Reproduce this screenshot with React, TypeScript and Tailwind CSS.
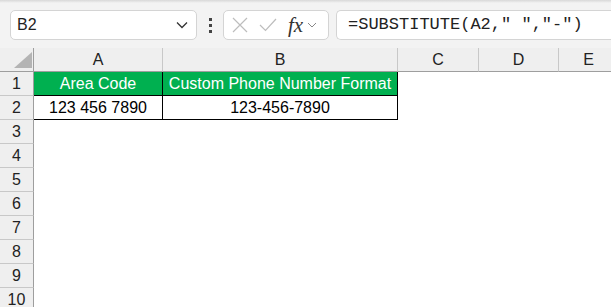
import React from 'react'

const cols = [
  { key: 'A', w: 129 },
  { key: 'B', w: 235 },
  { key: 'C', w: 81 },
  { key: 'D', w: 80 },
  { key: 'E', w: 60 },
]

const rows = [3, 4, 5, 6, 7, 8, 9, 10]

function Dots() {
  return (
    <div className="flex h-[30px] w-[26px] flex-col items-center justify-center gap-[3px]">
      <span className="h-[3px] w-[3px] bg-[#444]" />
      <span className="h-[3px] w-[3px] bg-[#444]" />
      <span className="h-[3px] w-[3px] bg-[#444]" />
    </div>
  )
}

function RowHead({ n }: { n: number }) {
  return (
    <div className="flex h-full w-[34px] shrink-0 items-center justify-center border-r border-b border-r-[#9e9e9e] border-b-[#c8c8c8] bg-[#efefef] text-[16px] text-[#222]">
      {n}
    </div>
  )
}

export default function App() {
  return (
    <div className="relative h-[307px] w-[611px] overflow-hidden bg-[#f3f3f3]" style={{ fontFamily: '"Liberation Sans", Arial, sans-serif' }}>
      <div className="h-[3px] bg-gradient-to-b from-[#d8d8d8] to-[#f3f3f3]" />
      {/* formula bar */}
      <div className="flex h-[45px] items-start pt-[7px] pl-[10px]">
        <div className="flex h-[30px] w-[187px] items-center justify-between rounded-[5px] border border-[#d4d4d4] bg-white pl-[6px] pr-[8px]">
          <span className="text-[16px] text-[#222]">B2</span>
          <svg width="12" height="8" viewBox="0 0 12 8" fill="none" stroke="#333" strokeWidth="1.3">
            <path d="M1 1.5 L6 6.5 L11 1.5" />
          </svg>
        </div>
        <Dots />
        <div className="flex h-[30px] w-[106px] items-center rounded-[5px] border border-[#d4d4d4] bg-white pl-[8px]">
          <svg width="16" height="16" viewBox="0 0 16 16" stroke="#bdbdbd" strokeWidth="1.2" fill="none">
            <path d="M1 1 L15 15 M15 1 L1 15" />
          </svg>
          <svg className="ml-[11px]" width="18" height="14" viewBox="0 0 18 14" stroke="#bdbdbd" strokeWidth="1.2" fill="none">
            <path d="M1 7 L6.5 12.5 L17 1" />
          </svg>
          <span className="ml-[11px] text-[21px] italic leading-none text-[#333]" style={{ fontFamily: '"Liberation Serif", serif' }}>fx</span>
          <svg className="ml-[4px]" width="10" height="6" viewBox="0 0 10 6" fill="none" stroke="#888" strokeWidth="1">
            <path d="M1 1 L5 5 L9 1" />
          </svg>
        </div>
        <div className="ml-[7px] flex h-[30px] flex-1 items-center rounded-l-[5px] border border-r-0 border-[#d4d4d4] bg-white pl-[11px]">
          <span className="text-[17px] text-[#222]" style={{ fontFamily: '"Liberation Mono", monospace' }}>=SUBSTITUTE(A2," ","-")</span>
        </div>
      </div>
      {/* column header */}
      <div className="flex h-[24px]">
        <div className="flex w-[34px] shrink-0 items-end justify-end border-r border-b border-[#9e9e9e] bg-[#efefef] pb-[3px] pr-[1px]">
          <svg width="18" height="16" viewBox="0 0 18 16">
            <polygon points="18,0 18,16 0,16" fill="#b4b4b4" />
          </svg>
        </div>
        {cols.map((c) => (
          <div key={c.key} style={{ width: c.w }} className="flex shrink-0 items-center justify-center border-r border-b border-r-[#c8c8c8] border-b-[#9e9e9e] bg-[#efefef] text-[16px] text-[#222]">
            {c.key}
          </div>
        ))}
      </div>
      {/* row 1 */}
      <div className="flex h-[24px]">
        <RowHead n={1} />
        <div className="flex w-[129px] shrink-0 items-center justify-center border-r border-b border-black bg-[#00b050] text-[16px] text-white">Area Code</div>
        <div className="flex w-[235px] shrink-0 items-center justify-center border-r border-b border-black bg-[#00b050] text-[16px] text-white">Custom Phone Number Format</div>
        <div className="flex-1 bg-white" />
      </div>
      {/* row 2 */}
      <div className="flex h-[24px]">
        <RowHead n={2} />
        <div className="flex w-[129px] shrink-0 items-center justify-center border-r border-b border-black bg-white text-[16px] text-black">123 456 7890</div>
        <div className="flex w-[235px] shrink-0 items-center justify-center border-r border-b border-black bg-white text-[16px] text-black">123-456-7890</div>
        <div className="flex-1 bg-white" />
      </div>
      {rows.map((n) => (
        <div key={n} className="flex h-[24px]">
          <RowHead n={n} />
          <div className="flex-1 bg-white" />
        </div>
      ))}
    </div>
  )
}
